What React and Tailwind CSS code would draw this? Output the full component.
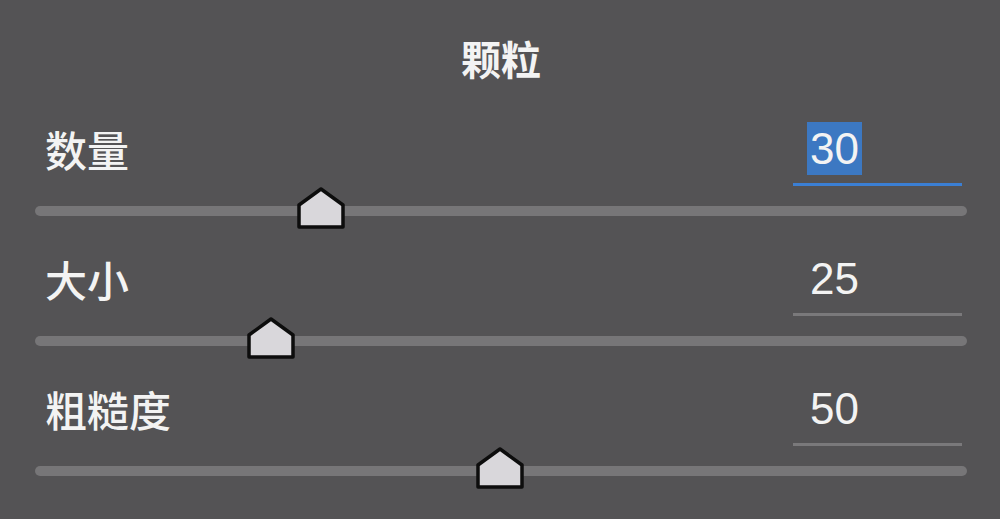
import React from 'react';

// --- Grain sliders ---
const rows = [
  { label: '数量', value: 30, pct: 30.7, active: true },
  { label: '大小', value: 25, pct: 25.3 },
  { label: '粗糙度', value: 50, pct: 49.9 },
];

const Thumb = () => (
  <svg width="50" height="44" viewBox="0 0 50 44">
    <path
      d="M3 19 L25 3 L47 19 L47 41 L3 41 Z"
      fill="#d9d7db"
      stroke="#0d0d0d"
      strokeWidth="3.5"
      strokeLinejoin="round"
    />
  </svg>
);

const SliderRow = ({ label, value, pct, active }) => (
  <div className="h-[130px] flex flex-col">
    <div className="h-[84px] flex justify-between items-start">
      <span className="ml-[10px] mt-[24px] text-[42px] leading-[42px] font-medium text-[#f3f3f3]">{label}</span>
      <div
        className={
          'mt-[18px] mr-[5px] w-[169px] pl-[14px] pb-[8px] border-b-[3px] ' +
          (active ? 'border-[#3b7fd4]' : 'border-[#7a797b]')
        }
      >
        <span
          className={
            'inline-block h-[53px] px-[3px] text-[44px] leading-[53px] text-[#f3f3f3] font-["Liberation_Sans",sans-serif] ' +
            (active ? 'bg-[#3c78c2]' : '')
          }
        >
          {value}
        </span>
      </div>
    </div>
    <div className="relative h-[46px] flex items-center">
      <div className="w-full h-[10px] rounded-full bg-[#777678]" />
      <div className="absolute top-[-2px] -translate-x-1/2" style={{ left: pct + '%' }}>
        <Thumb />
      </div>
    </div>
  </div>
);

export default function App() {
  return (
    <div className='w-[1000px] h-[519px] bg-[#545355] pl-[35px] pr-[33px] overflow-hidden font-["Noto_Sans_CJK_SC",sans-serif]'>
      <div className="h-[104px] pt-[12px] flex items-center justify-center">
        <h1 className="text-[40px] leading-[40px] font-bold text-[#f3f3f3]">颗粒</h1>
      </div>
      {rows.map((r) => (
        <SliderRow key={r.label} {...r} />
      ))}
    </div>
  );
}
